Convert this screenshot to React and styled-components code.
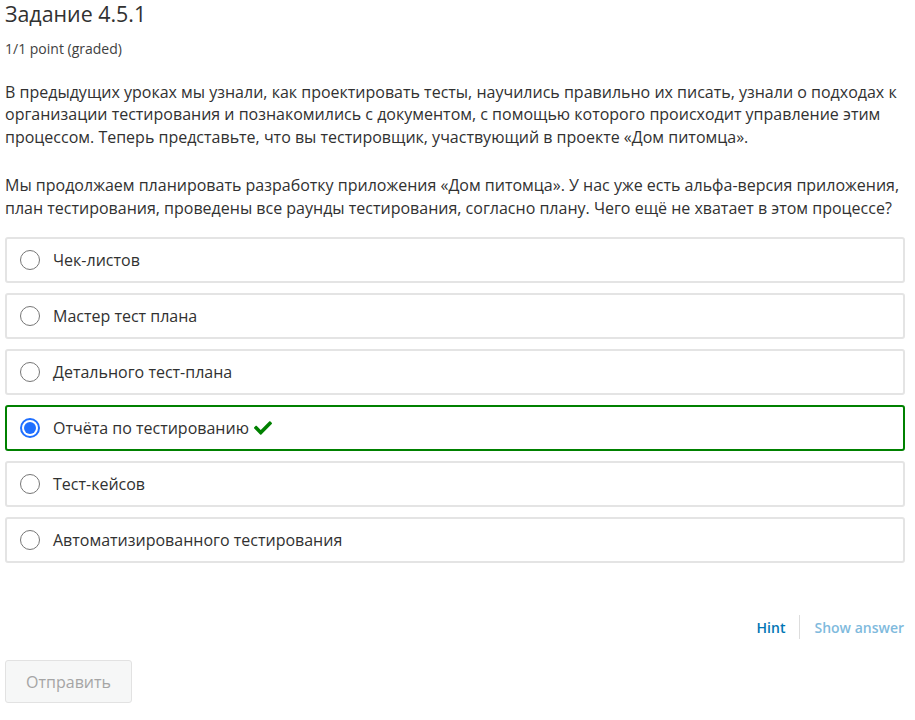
import styled, { createGlobalStyle } from "styled-components";
import { FaCheck } from "react-icons/fa";

const GlobalStyle = createGlobalStyle`
  body {
    margin: 0;
    background: #fff;
    font-family: "Open Sans", "Liberation Sans", sans-serif;
    color: #313131;
  }
`;

const Page = styled.div`
  padding: 0 10px 0 5px;
  width: 900px;
`;

const Title = styled.h3`
  margin: 0;
  font-size: 21.4px;
  font-weight: 400;
  line-height: 28px;
  color: #313131;
`;

const Points = styled.div`
  margin-top: 11px;
  font-size: 14px;
  line-height: 20px;
  color: #414141;
`;

const Prompt = styled.p`
  margin: ${(p) => (p.$first ? "22px" : "0")} 0 ${(p) => (p.$last ? "18px" : "26px")};
  font-size: 16px;
  line-height: 22.4px;
  color: #313131;
`;

const Options = styled.div`
  display: flex;
  flex-direction: column;
  gap: 10px;
`;

const Choice = styled.label`
  display: flex;
  align-items: center;
  height: 46px;
  box-sizing: border-box;
  padding: 0 13px;
  border: 2px solid ${(p) => (p.$correct ? "#008100" : "#e4e4e4")};
  border-radius: 3px;
  font-size: 16px;
  color: #313131;
`;

const Radio = styled.span`
  position: relative;
  width: 20px;
  height: 20px;
  margin-right: 13px;
  border-radius: 50%;
  box-sizing: border-box;
  border: 1px solid ${(p) => (p.$checked ? "#1a73e8" : "#767676")};
  flex-shrink: 0;
  ${(p) =>
    p.$checked &&
    `
    border: 2px solid #1f6fff;
    &::after {
      content: "";
      position: absolute;
      inset: 2px;
      border-radius: 50%;
      background: #1f6fff;
    }
  `}
`;

const Check = styled(FaCheck)`
  margin-left: 5px;
  width: 18px;
  height: 18px;
  color: #008100;
`;

const Actions = styled.div`
  display: flex;
  justify-content: flex-end;
  align-items: center;
  margin-top: 52px;
  padding-right: 1px;
`;

const ActionLink = styled.span`
  font-size: 14px;
  font-weight: 600;
  color: ${(p) => (p.$muted ? "#7fbadd" : "#0075b4")};
`;

const Divider = styled.span`
  width: 1px;
  height: 24px;
  margin: 0 14px;
  background: #ddd;
`;

const Submit = styled.button`
  margin-top: 21px;
  width: 127px;
  height: 43px;
  border: 1px solid #e2e2e2;
  border-radius: 3px;
  background: #f6f7f7;
  font-family: inherit;
  font-size: 16px;
  color: #a5a5a5;
`;

const options = [
  "Чек-листов",
  "Мастер тест плана",
  "Детального тест-плана",
  "Отчёта по тестированию",
  "Тест-кейсов",
  "Автоматизированного тестирования",
];

export default function App() {
  return (
    <>
      <GlobalStyle />
      <Page>
        <Title>Задание 4.5.1</Title>
        <Points>1/1 point (graded)</Points>
        <Prompt $first>
          В предыдущих уроках мы узнали, как проектировать тесты, научились правильно их писать, узнали о подходах к
          организации тестирования и познакомились с документом, с помощью которого происходит управление этим
          процессом. Теперь представьте, что вы тестировщик, участвующий в проекте «Дом питомца».
        </Prompt>
        <Prompt $last>
          Мы продолжаем планировать разработку приложения «Дом питомца». У нас уже есть альфа-версия приложения,
          план тестирования, проведены все раунды тестирования, согласно плану. Чего ещё не хватает в этом процессе?
        </Prompt>
        <Options>
          {options.map((o, i) => {
            const correct = i === 3;
            return (
              <Choice key={o} $correct={correct}>
                <Radio $checked={correct} />
                {o}
                {correct && <Check />}
              </Choice>
            );
          })}
        </Options>
        <Actions>
          <ActionLink>Hint</ActionLink>
          <Divider />
          <ActionLink $muted>Show answer</ActionLink>
        </Actions>
        <Submit>Отправить</Submit>
      </Page>
    </>
  );
}
